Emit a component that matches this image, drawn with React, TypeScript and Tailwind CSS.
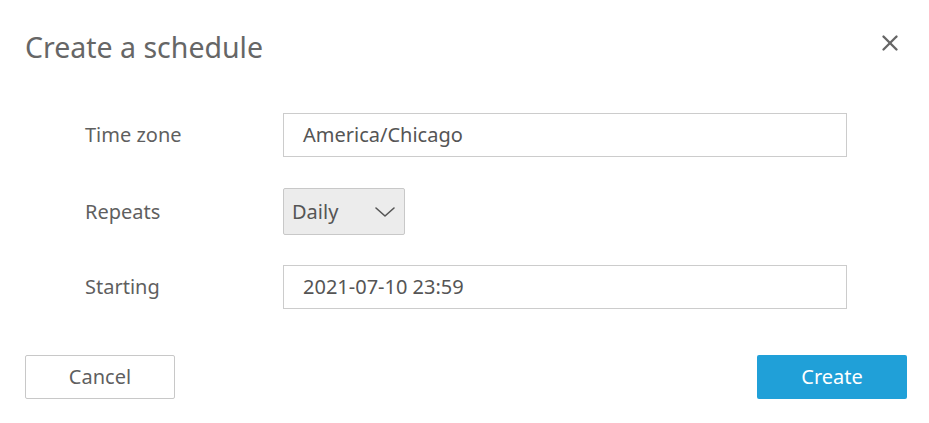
import { X } from "lucide-react";

const FONT = "font-['Noto_Sans','Open_Sans',sans-serif]";

function FieldRow({ label, children }: { label: string; children: React.ReactNode }) {
  return (
    <div className="flex items-center">
      <div className="w-[258px] pl-[60px] text-[20px] text-[#5f5f5f]">{label}</div>
      {children}
    </div>
  );
}

export default function App() {
  return (
    <div className={`w-[929px] h-[423px] bg-white pl-[25px] pr-[22px] ${FONT}`}>
      <div className="flex items-start justify-between pt-[26px]">
        <h2 className="text-[28.5px] leading-[42px] text-[#666666]">Create a schedule</h2>
        <button className="mr-[4px] mt-[4px] text-[#666666]">
          <X size={26} strokeWidth={2.2} />
        </button>
      </div>

      <div className="mt-[45px] flex flex-col">
        <FieldRow label="Time zone">
          <div className="flex h-[44px] w-[564px] items-center border border-[#cccccc] px-[19px] text-[20px] text-[#555555]">
            America/Chicago
          </div>
        </FieldRow>
        <div className="mt-[31px]">
          <FieldRow label="Repeats">
            <div className="flex h-[47px] w-[122px] items-center justify-between rounded-[2px] border border-[#c8c8c8] bg-[#ececec] pl-[8px] pr-[8px] text-[20px] text-[#555555]">
              <span>Daily</span>
              <svg width="22" height="12" viewBox="0 0 22 12" fill="none" stroke="currentColor" strokeWidth="1.6" strokeLinecap="round" strokeLinejoin="round">
                <path d="M2 2 L11 10 L20 2" />
              </svg>
            </div>
          </FieldRow>
        </div>
        <div className="mt-[30px]">
          <FieldRow label="Starting">
            <div className="flex h-[44px] w-[564px] items-center border border-[#cccccc] px-[19px] text-[20px] text-[#555555]">
              2021-07-10 23:59
            </div>
          </FieldRow>
        </div>
      </div>

      <div className="mt-[46px] flex justify-between">
        <button className="h-[44px] w-[150px] rounded-[2px] border border-[#c8c8c8] bg-white text-[20px] text-[#5f5f5f]">
          Cancel
        </button>
        <button className="h-[44px] w-[150px] rounded-[2px] bg-[#20a0d8] text-[20px] text-white">
          Create
        </button>
      </div>
    </div>
  );
}
